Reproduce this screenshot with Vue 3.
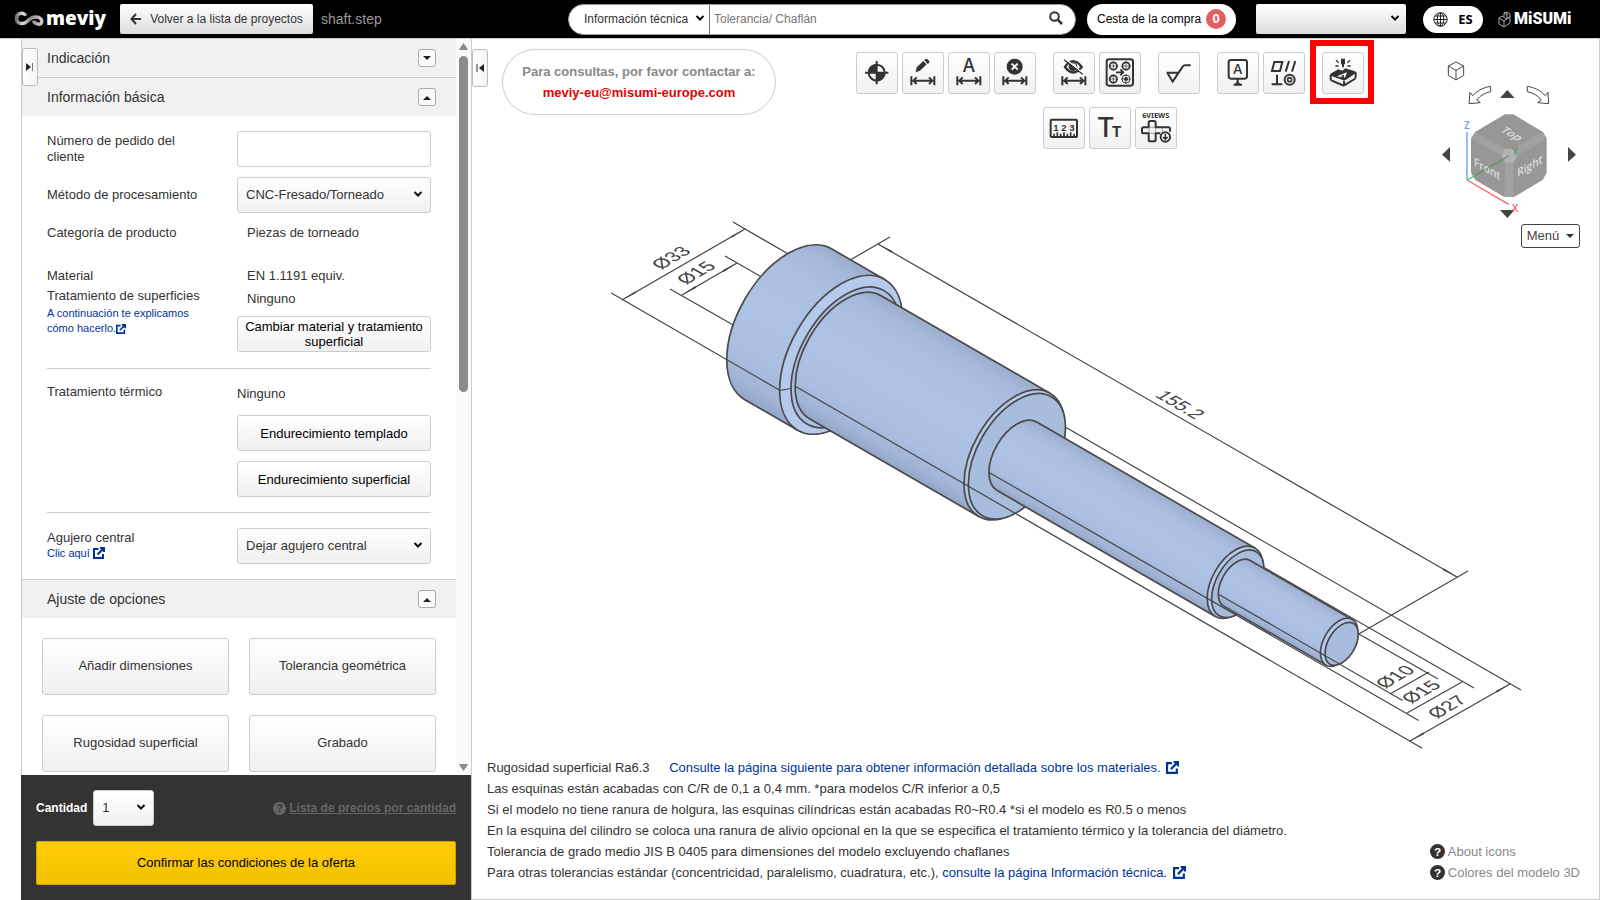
<script setup>
import { ref } from 'vue'

const orderNumber = ref('')
const keyword = ref('')
const options = ['Añadir dimensiones', 'Tolerancia geométrica', 'Rugosidad superficial', 'Grabado']

const toolRows = [
  [
    [{ id: 'origin', label: 'Origen' }, { id: 'edit', label: 'Editar dimensión' }, { id: 'text', label: 'Texto de dimensión' }, { id: 'delete', label: 'Eliminar dimensión' }],
    [{ id: 'hide', label: 'Ocultar dimensiones' }, { id: 'holes', label: 'Agrupar agujeros' }],
    [{ id: 'rough', label: 'Rugosidad' }],
    [{ id: 'datum', label: 'Referencia' }, { id: 'geo', label: 'Tolerancia geométrica' }],
    [{ id: 'engrave', label: 'Grabado', marked: true }],
  ],
  [[{ id: 'ruler', label: 'Medir' }, { id: 'size', label: 'Tamaño de texto' }, { id: 'views', label: 'Seis vistas' }]],
]

/* Shaft geometry: the x axis runs along the shaft, radii are relative to the flange. */
const R = 87
const cylinders = [
  { from: 0, to: 61, k: 1, rings: [{ s: 61, k: 1, fill: '#b5c9ed' }, { s: 66, k: 0.885, fill: '#abbfe3' }] },
  { from: 66, to: 261, k: 0.818, rings: [{ s: 261, k: 0.818, fill: '#b5c9ed' }, { s: 264, k: 0.79, fill: '#a8bcde' }] },
  { from: 264, to: 516, k: 0.4545, rings: [{ s: 516, k: 0.4545, fill: '#b5c9ed' }, { s: 519, k: 0.425, fill: '#a8bcde' }] },
  { from: 518, to: 636, k: 0.303, rings: [{ s: 636, k: 0.303, fill: '#b5c9ed' }, { s: 639, k: 0.27, fill: '#a8bcde' }] },
]
const body = (c) => {
  const a = R * c.k
  const b = a * 0.577
  return `M${c.to} ${-a}L${c.from} ${-a}A${b} ${a} 0 0 0 ${c.from} ${a}L${c.to} ${a}`
}
const diameters = [
  { text: 'Ø33', x: 661, y: 270 },
  { text: 'Ø15', x: 686, y: 285 },
  { text: 'Ø10', x: 1385, y: 689 },
  { text: 'Ø15', x: 1411, y: 704 },
  { text: 'Ø27', x: 1437, y: 719 },
]
</script>

<template>
  <div class="page">
    <header class="top">
      <a class="brand" href="#" aria-label="meviy">
        <svg width="30" height="18" viewBox="0 0 30 18" aria-hidden="true">
          <defs>
            <linearGradient id="inf" x1="0" x2="1"><stop offset="0" stop-color="#777" /><stop offset=".25" stop-color="#ddd" /><stop offset=".55" stop-color="#888" /><stop offset="1" stop-color="#ccc" /></linearGradient>
          </defs>
          <path d="M11 4.500C8 2 2.500 3 2.500 8.500S9 15 13 11.500S18 7 22 7S28.500 9.500 27.500 12.500S22 14 20 12" fill="none" stroke="url(#inf)" stroke-width="3.500" stroke-linecap="round" />
        </svg>
        <span>meviy</span>
      </a>
      <button class="back" type="button">
        <svg width="12" height="12" viewBox="0 0 12 12" aria-hidden="true"><path d="M6 1L1.500 6L6 11M1.500 6H11" fill="none" stroke="#333" stroke-width="2" /></svg>
        Volver a la lista de proyectos
      </button>
      <span class="file">shaft.step</span>
      <form class="search" @submit.prevent>
        <span class="sel scope">
          <select aria-label="Ámbito de búsqueda"><option>Información técnica</option></select>
          <svg class="chev" viewBox="0 0 10 6" aria-hidden="true"><path d="M1.500 1L5 4.500L8.500 1" /></svg>
        </span>
        <input v-model="keyword" type="text" placeholder="Tolerancia/ Chaflán" aria-label="Buscar" />
        <button type="submit" aria-label="Buscar">
          <svg width="14" height="14" viewBox="0 0 14 14" aria-hidden="true"><circle cx="5.500" cy="5.500" r="4.300" fill="none" stroke="#333" stroke-width="2" /><path d="M8.800 8.800L13 13" stroke="#333" stroke-width="2.500" /></svg>
        </button>
      </form>
      <a class="cart" href="#">Cesta de la compra <b>0</b></a>
      <span class="sel account">
        <select aria-label="Cuenta"><option></option></select>
        <svg class="chev" viewBox="0 0 10 6" aria-hidden="true"><path d="M1.500 1L5 4.500L8.500 1" /></svg>
      </span>
      <button class="lang" type="button">
        <svg width="15" height="15" viewBox="0 0 15 15" fill="none" stroke="#222" aria-hidden="true"><circle cx="7.500" cy="7.500" r="6.700" /><ellipse cx="7.500" cy="7.500" rx="3.300" ry="6.700" /><path d="M7.500 1V14M1 7.500H14M2 4H13M2 11H13" /></svg>
        ES
      </button>
      <a class="misumi" href="#" aria-label="MiSUMi">
        <svg width="13" height="17" viewBox="0 0 13 17" fill="none" stroke="#aaa" stroke-width="1" aria-hidden="true"><path d="M1 7L4 5L8 8L12 6V12L6 16L1 13ZM1 7L6 10L12 6M6 10V16M6 6V2L9 1L12 3V6M9 1V7M6 2L9 4" /></svg>
        <span>MiSUMi</span>
      </a>
    </header>

    <main class="main">
      <aside class="side">
        <div class="scroll">
          <div class="content">
            <div class="acc"><h2>Indicación</h2><button type="button" aria-label="Abrir Indicación"><svg width="8" height="5" viewBox="0 0 8 5" aria-hidden="true"><path d="M0 0H8L4 4Z" /></svg></button></div>
            <div class="acc open"><h2>Información básica</h2><button type="button" aria-label="Cerrar Información básica"><svg width="8" height="5" viewBox="0 0 8 5" aria-hidden="true"><path d="M0 5H8L4 1Z" /></svg></button></div>

            <div class="form">
              <div class="row mid">
                <label for="order">Número de pedido del cliente</label>
                <input id="order" v-model="orderNumber" type="text" />
              </div>
              <div class="row mid">
                <label for="method">Método de procesamiento</label>
                <span class="sel field"><select id="method"><option>CNC-Fresado/Torneado</option></select><svg class="chev" viewBox="0 0 10 6" aria-hidden="true"><path d="M1.500 1L5 4.500L8.500 1" /></svg></span>
              </div>
              <div class="row category"><p>Categoría de producto</p><p class="value">Piezas de torneado</p></div>
              <div class="row material">
                <div>
                  <p>Material</p>
                  <p>Tratamiento de superficies</p>
                  <a class="help" href="#">A continuación te explicamos cómo hacerlo.<svg class="ext" viewBox="0 0 12 12" aria-hidden="true"><path d="M5.500 2H1V11H10V7M7 1H11V5M11 1L4.500 7.500" /></svg></a>
                </div>
                <div>
                  <p class="value">EN 1.1191 equiv.</p>
                  <p class="value second">Ninguno</p>
                  <button class="btn" type="button">Cambiar material y tratamiento superficial</button>
                </div>
              </div>
              <div class="row heat">
                <p>Tratamiento térmico</p>
                <div class="stack">
                  <p>Ninguno</p>
                  <button class="btn" type="button">Endurecimiento templado</button>
                  <button class="btn" type="button">Endurecimiento superficial</button>
                </div>
              </div>
              <div class="row hole">
                <div>
                  <label for="hole">Agujero central</label>
                  <a class="help" href="#">Clic aquí <svg class="ext" viewBox="0 0 12 12" aria-hidden="true"><path d="M5.500 2H1V11H10V7M7 1H11V5M11 1L4.500 7.500" /></svg></a>
                </div>
                <span class="sel field"><select id="hole"><option>Dejar agujero central</option></select><svg class="chev" viewBox="0 0 10 6" aria-hidden="true"><path d="M1.500 1L5 4.500L8.500 1" /></svg></span>
              </div>
            </div>

            <div class="acc open ruled"><h2>Ajuste de opciones</h2><button type="button" aria-label="Cerrar Ajuste de opciones"><svg width="8" height="5" viewBox="0 0 8 5" aria-hidden="true"><path d="M0 5H8L4 1Z" /></svg></button></div>
            <div class="opts"><button v-for="o in options" :key="o" type="button">{{ o }}</button></div>
          </div>
          <div class="bar" aria-hidden="true">
            <svg width="9" height="8" viewBox="0 0 9 8"><path d="M0 8L1 6L4.500 1L8 6L9 8Z" /></svg>
            <i></i>
            <svg class="down" width="9" height="8" viewBox="0 0 9 8"><path d="M0 0L1 2L4.500 7L8 2L9 0Z" /></svg>
          </div>
          <button class="tab left" type="button" aria-label="Expandir panel"><svg width="8" height="8" viewBox="0 0 8 8" aria-hidden="true"><path d="M0 0L5 4L0 8Z" /><path d="M6.500 0V8" stroke="#777" /></svg></button>
        </div>
        <div class="foot">
          <div class="qty">
            <label for="qty">Cantidad</label>
            <span class="sel num"><select id="qty"><option>1</option></select><svg class="chev" viewBox="0 0 10 6" aria-hidden="true"><path d="M1.500 1L5 4.500L8.500 1" /></svg></span>
            <a href="#"><svg width="13" height="13" viewBox="0 0 14 14" aria-hidden="true"><circle cx="7" cy="7" r="7" fill="#666" /><text x="7" y="11" fill="#333">?</text></svg><span>Lista de precios por cantidad</span></a>
          </div>
          <button class="confirm" type="button">Confirmar las condiciones de la oferta</button>
        </div>
      </aside>

      <section class="viewer">
        <svg class="model" viewBox="472 39 1127 860" preserveAspectRatio="xMidYMid meet" role="img" aria-label="Modelo 3D del eje con dimensiones">
          <defs>
            <linearGradient id="steel" x1="0" y1="0" x2="0" y2="1">
              <stop offset="0" stop-color="#9caccb" /><stop offset=".08" stop-color="#a4b7d9" /><stop offset=".22" stop-color="#abbfe2" /><stop offset=".5" stop-color="#aec2e5" /><stop offset=".78" stop-color="#aabee1" /><stop offset=".92" stop-color="#a1b4d5" /><stop offset="1" stop-color="#94a6c8" />
            </linearGradient>
            <marker id="tip" viewBox="0 0 16 4" refX="16" refY="2" markerWidth="16" markerHeight="4" markerUnits="userSpaceOnUse" orient="auto-start-reverse"><path d="M0 1L16 2L0 3Z" fill="#444" /></marker>
          </defs>
          <g class="thin">
            <path d="M733 222L790 255M725 256L765 279M670 289L735 326M890 237L845 263" />
            <path d="M1060 424L1521 690M1258 564L1474 688M1350 629L1438 679M1468 571L1350 639" />
            <g marker-start="url(#tip)" marker-end="url(#tip)">
              <path marker-start="url(#tip)" marker-end="url(#tip)" d="M745 229L622 300" />
              <path marker-start="url(#tip)" marker-end="url(#tip)" d="M737 263L682 295" />
              <path marker-start="url(#tip)" marker-end="url(#tip)" d="M878 244L1457 577" />
              <path marker-start="url(#tip)" marker-end="url(#tip)" d="M1510 684L1410 741" />
            </g>
            <path d="M1462 682L1407 713M1429 672L1390 694" />
          </g>
          <g transform="translate(788.300 324.300) rotate(30)">
            <g v-for="(c, i) in cylinders" :key="i" class="solid">
              <path :d="body(c)" fill="url(#steel)" />
              <ellipse v-for="(r, j) in c.rings" :key="j" :cx="r.s" cy="0" :rx="R * r.k * 0.577" :ry="R * r.k" :fill="r.fill" />
            </g>
            <g class="thin">
              <path d="M-169 61.400H26M26 61.400L34 54.500M37 50.200H761M248 27.900H744M508 18.600H720" />
            </g>
          </g>
          <g class="dims">
            <text v-for="(d, i) in diameters" :key="i" :transform="`matrix(.866 -.5 .866 .5 ${d.x} ${d.y})`">{{ d.text }}</text>
            <text transform="matrix(.866 .5 -.866 .5 1154 396)">155.2</text>
          </g>
        </svg>

        <button class="tab right" type="button" aria-label="Contraer panel"><svg width="8" height="8" viewBox="0 0 8 8" aria-hidden="true"><path d="M8 0L3 4L8 8Z" /><path d="M1 0V8" stroke="#333" /></svg></button>

        <div class="over">
          <div class="contact"><span>Para consultas, por favor contactar a:</span><a href="#">meviy-eu@misumi-europe.com</a></div>
          <div class="tools">
            <div v-for="(row, r) in toolRows" :key="r" class="toolrow">
              <div v-for="(group, g) in row" :key="g" class="group">
                <span v-for="t in group" :key="t.id" class="tool" :class="{ marked: t.marked }">
                  <button type="button" :aria-label="t.label">
                    <svg viewBox="0 0 126 126" aria-hidden="true">
                      <g v-if="['edit', 'text', 'delete', 'hide'].includes(t.id)" class="ln">
                        <path d="M28 73V100M97 73V100M34 86H91M44 76L34 86L44 96M81 76L91 86L81 96" />
                      </g>
                      <g v-if="t.id === 'origin'" class="ln">
                        <circle cx="62" cy="62" r="24" /><path d="M62 27V97M27 62H97" /><path class="fl" d="M62 62V38A24 24 0 0 0 38 62ZM62 62V86A24 24 0 0 0 86 62Z" />
                      </g>
                      <g v-else-if="t.id === 'edit'" class="fl"><path d="M41 61L44 46L64 27L74 37L54 56ZM67 24L70 21Q74 19 78 23L81 26Q84 30 81 33L77 36Z" /></g>
                      <text v-else-if="t.id === 'text'" class="la" x="63" y="60">A</text>
                      <g v-else-if="t.id === 'delete'"><circle class="fl" cx="62" cy="44" r="24" /><path d="M53 35L71 53M71 35L53 53" stroke="#fff" stroke-width="6" /></g>
                      <g v-else-if="t.id === 'hide'" class="ln">
                        <path stroke-width="7" d="M36 45Q60 10 86 45Q60 78 36 45Z" /><circle class="fl" cx="60" cy="44" r="13" /><path d="M58 36Q68 36 69 46" stroke="#fff" stroke-width="4" /><path d="M38 22L93 66" stroke="#fff" stroke-width="4" /><path stroke-width="4" d="M33 23L89 67" />
                      </g>
                      <g v-else-if="t.id === 'holes'" class="ln">
                        <rect x="23" y="22" width="79" height="79" rx="7" /><g stroke-width="5"><circle cx="43" cy="42" r="11" /><circle cx="81" cy="42" r="11" /><circle cx="43" cy="81" r="11" /><circle cx="81" cy="81" r="12" stroke-width="3" /></g>
                        <circle cx="81" cy="81" r="6" class="fl" /><path stroke-width="2" d="M43 28V56M29 42H57M81 28V56M67 42H95M43 67V95M29 81H57M81 66V96M66 81H96" />
                        <path stroke-width="5" d="M51 61H72M64 52L73 61L64 70" />
                      </g>
                      <g v-else-if="t.id === 'rough'" class="ln"><path d="M26 62H61M28 62L44 89L74 44Q77 40 82 40H98" /></g>
                      <g v-else-if="t.id === 'datum'"><g class="ln"><rect x="35" y="24" width="55" height="56" rx="7" /><path d="M62 80V97M50 98H75" /></g><path class="fl" d="M62 87L72 98H52Z" /><text class="la small" x="62" y="67">A</text></g>
                      <g v-else-if="t.id === 'geo'" class="ln"><path d="M34 30H58L51 57H27ZM78 27L68 59M97 27L87 59M42 68V97M26 97H58" /><circle cx="80" cy="83" r="15" /><circle cx="80" cy="83" r="6" stroke-width="5" /></g>
                      <g v-else-if="t.id === 'engrave'">
                        <path class="fl" d="M24 68Q25 65 29 63L49 52L61 56L70 49L99 58Q104 61 99 65L72 83Q67 86 62 84L26 71Z" />
                        <g class="ln"><path stroke-width="6" d="M26 70V81Q26 84 30 86L60 99Q65 102 70 98L98 81Q102 78 101 61M66 86V99" /></g>
                        <path d="M45 73L75 61L69 77L65 75L67 68L56 72L60 74L57 76Z" fill="#fff" />
                        <path class="fl" d="M57 20H69V35L66 38V46H60V38L57 35Z" /><g class="ln"><path stroke-width="4" d="M42 25L50 32M40 42H50M84 25L76 32M86 42H76" /></g>
                      </g>
                      <g v-else-if="t.id === 'ruler'"><g class="ln"><rect x="23" y="38" width="79" height="52" rx="3" /><path stroke-width="5" d="M33 80V88M43 76V88M53 80V88M63 76V88M73 80V88M83 76V88M93 80V88" /></g><text class="digits" x="63" y="71">1 2 3</text></g>
                      <g v-else-if="t.id === 'size'"><text class="tt" x="50" y="90">T</text><text class="tt lo" x="83" y="90">T</text></g>
                      <g v-else-if="t.id === 'views'">
                        <text class="six" x="62" y="33">6VIEWS</text>
                        <g class="ln">
                          <path d="M76 79H62V98Q62 103 57 103H46Q41 103 41 98V79H26Q21 79 21 74V66Q21 61 26 61H41V47Q41 42 46 42H57Q62 42 62 47V61H100Q105 61 105 66V74" />
                          <path d="M43 61H61M43 79H61M42 62V78M62 62V78M82 62V76" stroke="#777" stroke-width="2" />
                          <circle cx="91" cy="90" r="14" fill="#fff" /><path stroke-width="5" d="M91 81V97M84 90L91 97L98 90" />
                        </g>
                      </g>
                    </svg>
                  </button>
                </span>
              </div>
            </div>
          </div>

          <div class="nav">
            <svg width="140" height="171" viewBox="0 0 140 171" role="img" aria-label="Cubo de orientación">
              <g transform="translate(-280 -13) scale(.33333)">
                <path class="wire" d="M888 66L911 78V106L888 120L865 106V78ZM865 78L888 91L911 78M888 91V120" />
                <path class="wire" d="M992 139V155Q966 160 950 180L961 188L927 191L930 157L938 167Q960 143 992 139Z" />
                <path class="wire" d="M1102 139V155Q1128 160 1144 180L1133 188L1166 191L1164 157L1156 167Q1134 143 1102 139Z" />
                <path d="M1020 174H1064L1042 150ZM1020 510H1064L1042 534ZM870 321V365L846 344ZM1224 321V365L1248 344Z" fill="#444" />
                <path d="M1035 223H1060L1148 275L1160 296V398L1148 420L1062 471H1033L946 420L933 398V296L946 275Z" fill="#979797" />
                <path d="M946 275L1035 327L1024 347L933 296ZM1148 275L1060 327L1072 347L1160 296Z" fill="#a0a0a0" />
                <path d="M1035 367H1060V471H1033Z" fill="#a2a2a2" /><path d="M1035 327H1060L1072 347L1060 368H1035L1024 347Z" fill="#b3b3b3" />
                <path d="M921 420V276" stroke="#7fb2ee" stroke-width="5" /><path d="M921 420L1046 493" stroke="#ff6565" stroke-width="4" /><path d="M921 420L946 406" stroke="#35d06a" stroke-width="4" /><path d="M946 406L1046 348" stroke="#579a6a" stroke-width="4" />
                <g class="cube">
                  <text transform="matrix(.866 .5 -.866 .5 1018 272)">Top</text>
                  <text transform="matrix(.866 .5 0 1 942 376)">Front</text>
                  <text transform="matrix(.866 -.5 0 1 1072 412)">Right</text>
                </g>
                <text class="ax" x="912" y="266" fill="#6aa5ea">Z</text><text class="ax" x="1057" y="346" fill="#579a6a">Y</text><text class="ax" x="1056" y="515" fill="#ff5c5c">X</text>
              </g>
            </svg>
            <button type="button">Menú <svg width="8" height="4" viewBox="0 0 8 4" aria-hidden="true"><path d="M0 0H8L4 4Z" fill="#333" /></svg></button>
          </div>
        </div>

        <div class="bottom">
          <div class="notes">
            <p>Rugosidad superficial Ra6.3 <a class="gap" href="#">Consulte la página siguiente para obtener información detallada sobre los materiales. <svg class="ext" viewBox="0 0 12 12" aria-hidden="true"><path d="M5.500 2H1V11H10V7M7 1H11V5M11 1L4.500 7.500" /></svg></a></p>
            <p>Las esquinas están acabadas con C/R de 0,1 a 0,4 mm. *para modelos C/R inferior a 0,5</p>
            <p>Si el modelo no tiene ranura de holgura, las esquinas cilíndricas están acabadas R0~R0.4 *si el modelo es R0.5 o menos</p>
            <p>En la esquina del cilindro se coloca una ranura de alivio opcional en la que se especifica el tratamiento térmico y la tolerancia del diámetro.</p>
            <p>Tolerancia de grado medio JIS B 0405 para dimensiones del modelo excluyendo chaflanes</p>
            <p>Para otras tolerancias estándar (concentricidad, paralelismo, cuadratura, etc.), <a href="#">consulte la página Información técnica. <svg class="ext" viewBox="0 0 12 12" aria-hidden="true"><path d="M5.500 2H1V11H10V7M7 1H11V5M11 1L4.500 7.500" /></svg></a></p>
          </div>
          <div class="helps">
            <a v-for="h in ['About icons', 'Colores del modelo 3D']" :key="h" href="#"><svg width="15" height="15" viewBox="0 0 14 14" aria-hidden="true"><circle cx="7" cy="7" r="7" fill="#333" /><text x="7" y="11" fill="#fff">?</text></svg>{{ h }}</a>
          </div>
        </div>
      </section>
    </main>
  </div>
</template>

<style>
body { margin: 0; background: #fff; }
</style>

<style scoped>
.page { display: flex; flex-direction: column; height: 100vh; min-height: 600px; font: 13px/16px "Liberation Sans", Arial, sans-serif; color: #333; }
* { box-sizing: border-box; }
p, h2 { margin: 0; font-weight: normal; }
button, input, select { font: inherit; color: inherit; margin: 0; padding: 0; }
a { text-decoration: none; color: #039; }
button { cursor: pointer; }

.top { display: flex; align-items: center; flex: none; height: 38px; padding: 0 29px 0 14px; background: #000; font-size: 12px; }
.brand { display: flex; align-items: center; gap: 2px; width: 106px; color: #fff; font: 800 19px/24px "Open Sans", sans-serif; }
.brand span { padding-bottom: 2px; }
.brand svg, .misumi svg { flex: none; }
.back { display: flex; align-items: center; justify-content: center; gap: 8px; width: 193px; height: 30px; border: 0; border-radius: 2px; background: linear-gradient(#fff, #ddd); }
.file { flex: 1; padding-left: 8px; font-size: 14px; color: #999; }
.sel { position: relative; display: block; }
.sel select { width: 100%; height: 100%; appearance: none; border: 1px solid #ccc; border-radius: 3px; padding: 0 24px 0 8px; background: linear-gradient(#fff, #f0f0f0); }
.chev { position: absolute; right: 8px; top: 50%; width: 10px; height: 6px; margin-top: -4px; pointer-events: none; }
.chev path { fill: none; stroke: #111; stroke-width: 2; }
.search { display: flex; align-items: center; width: 508px; height: 31px; margin-right: 11px; border: 1px solid #999; border-radius: 16px; background: #fff; overflow: hidden; }
.scope { width: 141px; height: 29px; border-right: 1px solid #777; }
.scope select { border: 0; padding-left: 15px; padding-right: 16px; background: transparent; }
.scope .chev { right: 4px; }
.search input { flex: 1; min-width: 0; height: 29px; border: 0; padding: 0 4px; background: transparent; outline: 0; }
.search input::placeholder { color: #757575; }
.search button { display: flex; width: 26px; border: 0; background: transparent; padding-bottom: 3px; }
.cart { display: flex; align-items: center; gap: 5px; width: 149px; height: 31px; margin-right: 20px; padding: 0 10px; border-radius: 16px; background: #fff; color: #000; white-space: nowrap; }
.cart b { width: 20px; height: 20px; border-radius: 10px; background: #e05f5f; color: #fff; font-size: 13px; line-height: 20px; text-align: center; }
.account { width: 150px; height: 30px; margin-right: 17px; }
.account select { border: 0; border-radius: 2px; background: linear-gradient(#fff, #ddd); }
.account .chev { right: 6px; }
.lang { display: flex; align-items: center; justify-content: center; gap: 10px; width: 60px; height: 27px; margin-right: 15px; border: 0; border-radius: 14px; background: #fff; color: #000; font: 700 13px/16px "Noto Sans", sans-serif; }
.misumi { display: flex; align-items: center; gap: 3px; width: 73px; color: #fff; font: 900 16px/20px Roboto, sans-serif; }

.main { display: flex; flex: 1; min-height: 0; border-top: 1px solid #ccc; }
.side { display: flex; flex-direction: column; flex: none; width: 450px; margin-left: 21px; }
.scroll { position: relative; display: flex; flex: 1; min-height: 0; border-left: 1px solid #ccc; }
.content { flex: 1; overflow: hidden; }
.acc { display: flex; align-items: center; justify-content: space-between; height: 39px; padding: 0 20px 0 25px; background: #f1f1f1; border-bottom: 1px solid #ccc; }
.acc.open { height: 38px; border-bottom: 0; }
.acc.ruled { height: 39px; border-top: 1px solid #ccc; }
.acc h2 { font-size: 14px; }
.acc button { display: flex; align-items: center; justify-content: center; width: 18px; height: 18px; border: 1px solid #aaa; border-radius: 3px; background: #fafafa; }
.acc svg, .tab svg { fill: #222; }
.form { padding: 15px 25px; }
.row { display: grid; grid-template-columns: 190px minmax(0, 1fr); }
.row.mid { align-items: center; margin-bottom: 10px; }
.row label { display: block; padding-right: 50px; }
.row.mid + .row.mid label { padding-right: 0; }
.row > p, .row div > p { line-height: 20px; }
.row input { width: 100%; height: 36px; border: 1px solid #ccc; border-radius: 3px; padding: 0 8px; background: #fff; }
.field { height: 36px; }
.value { padding-left: 10px; }
.second { margin: 3px 0 7px; }
.category { margin-bottom: 23px; }
.material { padding-bottom: 16px; border-bottom: 1px solid #ccc; }
.heat { padding: 13px 0 15px; border-bottom: 1px solid #ccc; }
.hole { padding-top: 15px; }
.hole label { padding-top: 2px; }
.help { display: block; padding-right: 40px; font-size: 11px; line-height: 15px; }
.ext { width: 12px; height: 12px; vertical-align: -2px; fill: none; stroke: #039; stroke-width: 2; }
.material .ext { width: 10px; height: 10px; }
.btn { display: block; width: 100%; height: 36px; border: 1px solid #ccc; border-radius: 3px; background: linear-gradient(#fff, #f0f0f0); color: #000; line-height: 15px; }
.stack { display: grid; gap: 10px; padding-top: 2px; }
.stack p { margin-bottom: 1px; }
.opts { display: grid; grid-template-columns: 1fr 1fr; gap: 20px; padding: 20px; }
.opts button { height: 57px; padding-bottom: 2px; border: 1px solid #ccc; border-radius: 3px; background: linear-gradient(#fff, #f0f0f0); }
.bar { display: flex; flex-direction: column; align-items: center; width: 15px; padding: 3px 0; background: #fafafa; fill: #8b8b8b; }
.bar i { width: 9px; height: 336px; margin-top: 6px; border-radius: 5px; background: #8b8b8b; }
.bar .down { margin-top: auto; }
.tab { position: absolute; display: flex; align-items: center; justify-content: center; left: 0; top: 9px; width: 16px; height: 38px; border: 1px solid #bbb; border-radius: 3px; background: linear-gradient(90deg, #fff, #f4f4f4); z-index: 1; }
.tab.right { top: 10px; }
.foot { flex: none; display: grid; gap: 15px; padding: 15px; background: #333; }
.qty { display: flex; align-items: center; gap: 6px; height: 36px; color: #fff; font-size: 12px; font-weight: bold; }
.num { width: 61px; height: 36px; color: #333; font-size: 13px; font-weight: normal; }
.qty a { display: flex; align-items: center; gap: 3px; margin-left: auto; color: #666; }
.qty a span { text-decoration: underline; }
.qty text, .helps text { font: bold 11px "Liberation Sans", Arial, sans-serif; text-anchor: middle; }
.confirm { height: 44px; border: 1px solid #c9a400; border-radius: 2px; background: linear-gradient(#ffcc03, #f2c200); color: #000; }

.viewer { position: relative; display: flex; flex: 1; flex-direction: column; justify-content: space-between; min-width: 0; border: 1px solid #ccc; border-top: 0; }
.model { position: absolute; inset: 0; width: 100%; height: 100%; }
.thin { fill: none; stroke: #444; stroke-width: 1.200; }
.solid { stroke: #4a4a4a; stroke-width: 1.700; }
.dims text { font: 19px "Liberation Sans", Arial, sans-serif; fill: #444; }
.over { position: relative; display: flex; align-items: flex-start; padding-left: 30px; }
.contact { display: flex; flex: none; flex-direction: column; justify-content: center; gap: 5px; width: 274px; height: 66px; margin-top: 10px; border: 1px solid #ccc; border-radius: 33px; text-align: center; font-weight: bold; color: #888; }
.contact a { color: #e60000; }
.tools { display: grid; gap: 13px; margin: 13px 0 0 80px; }
.toolrow { display: flex; justify-content: center; gap: 17px; }
.group { display: flex; gap: 4px; }
.tool { position: relative; display: block; width: 42px; height: 42px; }
.tool button { display: block; width: 42px; height: 42px; border: 1px solid #ccc; border-radius: 3px; background: linear-gradient(#fff, #f0f0f0); }
.tool svg { display: block; width: 42px; height: 42px; margin: -1px; }
.marked::after { content: ""; position: absolute; inset: -12px -10px -10px -12px; border: 6px solid #f00; pointer-events: none; }
.ln { fill: none; stroke: #333; stroke-width: 6; }
.fl { fill: #333; stroke: none; }
.la { font: 500 54px Inter, sans-serif; fill: #333; text-anchor: middle; }
.la.small { font-size: 40px; }
.digits { font: bold 29px "Liberation Sans", sans-serif; fill: #333; text-anchor: middle; }
.tt { font: 500 80px Inter, sans-serif; fill: #333; text-anchor: middle; }
.tt.lo { font-size: 44px; font-weight: 700; }
.six { font: bold 22px "Noto Sans", sans-serif; fill: #333; text-anchor: middle; }
.nav { display: flex; flex-direction: column; align-items: flex-end; width: 140px; margin: 14px 19px 0 auto; }
.nav > svg { display: block; }
.wire { fill: #fff; stroke: #444; stroke-width: 3; }
.cube text { font: 600 35px "Open Sans", sans-serif; fill: #dcdcdc; }
.ax { font: 600 30px "Open Sans", sans-serif; }
.nav button { display: flex; align-items: center; justify-content: center; gap: 7px; width: 59px; height: 24px; border: 1px solid #444; border-radius: 3px; background: #fff; color: #444; }
.bottom { position: relative; display: flex; align-items: flex-end; justify-content: space-between; padding: 0 19px 16px 15px; line-height: 21px; }
.notes .gap { margin-left: 16px; }
.notes .ext { width: 13px; height: 13px; margin-left: 2px; }
.helps a { display: flex; align-items: center; gap: 3px; color: #888; }
</style>
